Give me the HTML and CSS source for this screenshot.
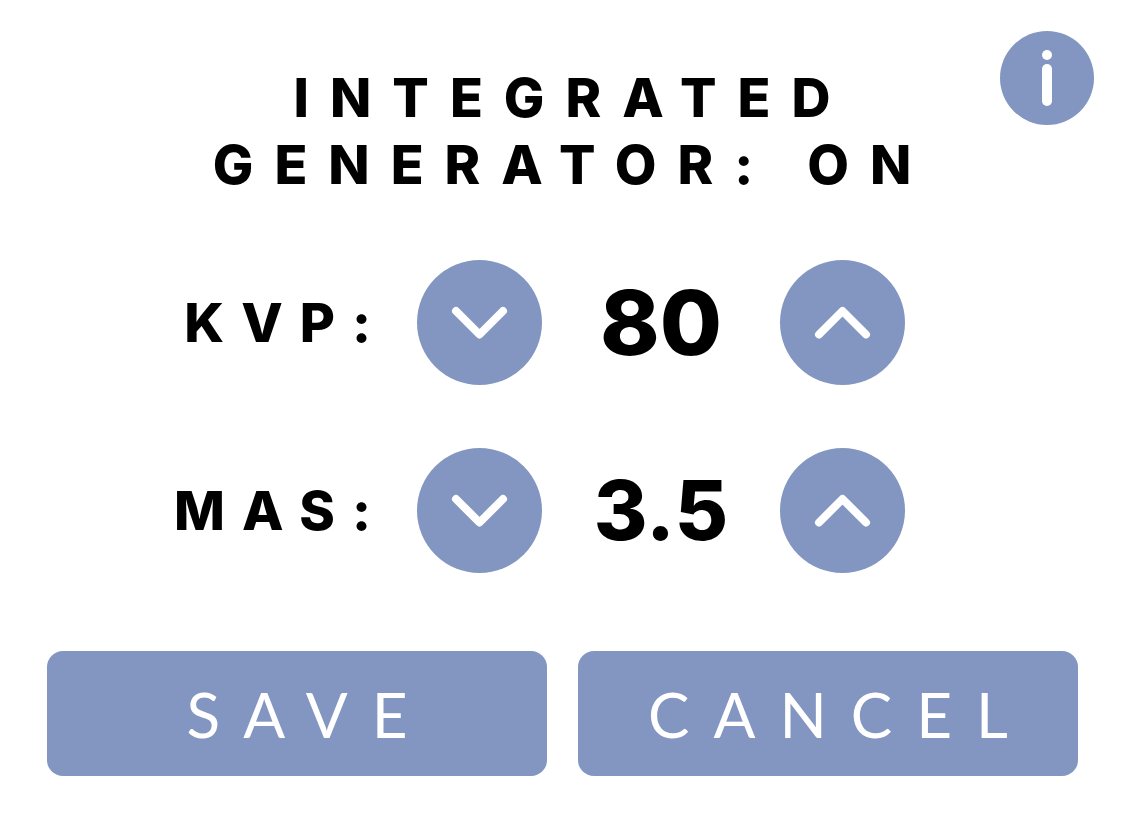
FILE: index.html
```html
<!DOCTYPE html>
<html lang="en">

<head>
    <meta charset="UTF-8">
    <meta name="viewport" content="width=device-width, initial-scale=1.0">
    <title>Integrated Generator</title>
    <link rel="stylesheet" href="styles.css">
</head>

<body>
    <button type="button" class="info" aria-label="Information">
        <svg viewBox="0 0 94 94">
            <circle cx="47" cy="24" r="5"></circle>
            <path d="M47 38v32"></path>
        </svg>
    </button>
    <form class="panel">
        <h1>INTEGRATED<br>GENERATOR: ON</h1>
        <div class="settings">
            <div class="row">
                <label class="name" for="kvp">KVP:</label>
                <button type="button" class="round" aria-label="Decrease KVP">
                    <svg viewBox="0 0 125 125"><path d="M39 51l23.500 23.500 23.500-23.500"></path></svg>
                </button>
                <output class="value" id="kvp">80</output>
                <button type="button" class="round" aria-label="Increase KVP">
                    <svg viewBox="0 0 125 125"><path d="M39 74.500l23.500-23.500 23.500 23.500"></path></svg>
                </button>
            </div>
            <div class="row">
                <label class="name" for="mas">MAS:</label>
                <button type="button" class="round" aria-label="Decrease MAS">
                    <svg viewBox="0 0 125 125"><path d="M39 51l23.500 23.500 23.500-23.500"></path></svg>
                </button>
                <output class="value decimal" id="mas">3.5</output>
                <button type="button" class="round" aria-label="Increase MAS">
                    <svg viewBox="0 0 125 125"><path d="M39 74.500l23.500-23.500 23.500 23.500"></path></svg>
                </button>
            </div>
        </div>
        <div class="actions">
            <button type="button" class="btn">SAVE</button>
            <button type="button" class="btn">CANCEL</button>
        </div>
    </form>
</body>

</html>
```
FILE: styles.css
```css
* {
    box-sizing: border-box;
}

body {
    margin: 0;
    background-color: white;
    color: black;
    font-family: Inter, "Open Sans", sans-serif;
}

button {
    border: 0;
    padding: 0;
    color: white;
    background-color: #8396c1;
    cursor: pointer;
}

svg {
    display: block;
    width: 100%;
    fill: none;
    stroke: white;
    stroke-width: 8px;
    stroke-linecap: round;
    stroke-linejoin: round;
}

/* sits over the corner of the panel */
.info {
    position: absolute;
    top: 31px;
    right: 31px;
    width: 94px;
    height: 94px;
    border-radius: 50%;
}

.info circle {
    fill: white;
    stroke: none;
}

.info path {
    stroke-width: 10px;
}

.panel {
    padding: 64px 47px 45px;
}

h1 {
    margin: 0;
    padding-left: 20px;
    font-size: 54px;
    font-weight: 800;
    line-height: 67px;
    letter-spacing: 21px;
    text-align: center;
}

.settings {
    display: grid;
    gap: 63px;
    margin-top: 62px;
}

.row {
    display: grid;
    grid-template-columns: 370px 125px 238px 125px;
    align-items: center;
}

.name {
    padding-right: 29px;
    font-size: 54px;
    font-weight: 800;
    letter-spacing: 17px;
    text-align: right;
}

.round {
    width: 125px;
    height: 125px;
    border-radius: 50%;
}

.value {
    font-size: 90px;
    font-weight: 800;
    line-height: 125px;
    text-align: center;
}

.decimal {
    font-size: 82px;
}

.actions {
    display: grid;
    grid-template-columns: 1fr 1fr;
    gap: 31px;
    margin-top: 78px;
}

.btn {
    height: 125px;
    padding-left: 24px;
    border-radius: 16px;
    font-family: Lato, sans-serif;
    font-size: 62px;
    font-weight: 400;
    letter-spacing: 24px;
}
```
